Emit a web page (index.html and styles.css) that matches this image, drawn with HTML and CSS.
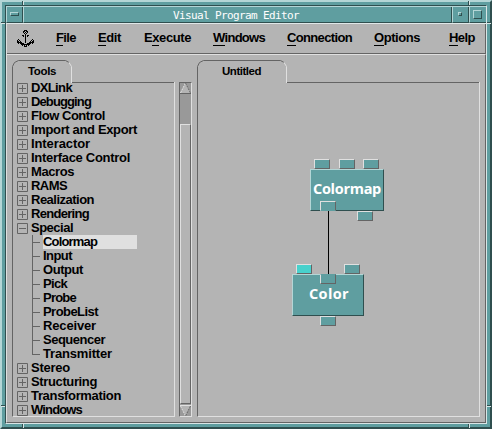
FILE: index.html
```html
<!DOCTYPE html>
<html lang="en">
<head>
<meta charset="utf-8">
<title>Visual Program Editor</title>
<link rel="stylesheet" href="styles.css">
</head>
<body>
<div class="window">
  <div class="frame">
    <header class="titlebar">
      <div class="tb-btn menu-btn"><i></i></div>
      <div class="tb-title"><span data-w="126">Visual Program Editor</span></div>
      <div class="tb-btn min-btn"><i></i></div>
      <div class="tb-btn max-btn"><i></i></div>
    </header>
    <nav class="menubar">
      <svg class="anchor" width="18" height="18" viewBox="0 0 18 18" shape-rendering="crispEdges">
        <defs><pattern id="dither" width="2" height="2" patternUnits="userSpaceOnUse"><path d="M0 0h1v1H0zM1 1h1v1H1z"/></pattern></defs>
        <path fill="url(#dither)" d="M7 0h3v1h1v3h-1v1H7V4H6V1h1zM5 6h7v1H5zM1 9h1v1h1v1h1v2h3v1h3v-1h3v-2h1v-1h1V9h1v1h1v3h-1v1h-2v1h-2v1h-2v1H7v-1H5v-1H3v-1H1v-1H0v-3h1z"/>
        <path d="M7 0h3v1H7zM6 1h1v2H6zM10 1h1v2h-1zM8 4h1v9H8zM5 5h2v1H5zM10 5h2v1h-2zM6 6h1v1H6zM10 6h1v1h-1zM1 9h1v1H1zM15 9h1v1h-1zM0 10h1v2H0zM2 10h1v1H2zM14 10h1v1h-1zM16 10h1v2h-1zM1 12h4v1H1zM12 12h4v1h-4zM3 13h4v1H3zM10 13h4v1h-4zM5 14h2v1H5zM7 14h3v1H7zM10 14h2v1h-2zM7 16h3v1H7z"/>
      </svg>
      <a class="m-file" data-w="20"><u>F</u>ile</a>
      <a class="m-edit" data-w="23"><u>E</u>dit</a>
      <a class="m-exec" data-w="47">E<u>x</u>ecute</a>
      <a class="m-wind" data-w="52"><u>W</u>indows</a>
      <a class="m-conn" data-w="65"><u>C</u>onnection</a>
      <a class="m-opts" data-w="46"><u>O</u>ptions</a>
      <a class="m-help" data-w="26"><u>H</u>elp</a>
    </nav>
    <main class="work">
      <section class="panel tools">
        <svg class="tab" width="163" height="25" viewBox="0 0 163 25" fill="none">
          <path stroke="#646464" d="M.5 25V6.5L2.5 2.5 6.5.5H53.500L57 2.500M60 22.500H162"/>
          <path stroke="#e0e0e0" d="M57 2.500L59.500 6.500V23"/>
        </svg>
        <h2 class="tab-label"><span data-w="28">Tools</span></h2>
        <div class="tree" id="tree"></div>
      </section>
      <div class="scrollbar">
        <svg width="11" height="11" viewBox="0 0 11 11" fill="none"><path fill="#b4b4b4" d="M0 10L5.500 0 11 10z"/><path stroke="#e0e0e0" stroke-dasharray="2 1" d="M.5 10L5.500 0"/><path stroke="#646464" stroke-dasharray="2 1" d="M5.500 0L10.500 10"/><path stroke="#646464" d="M0 10.500H11"/></svg>
        <div class="trough"></div>
        <div class="thumb"></div>
        <svg width="11" height="12" viewBox="0 0 11 12" fill="none"><path fill="#b4b4b4" d="M0 1H11L5.500 12z"/><path stroke="#e0e0e0" d="M0 1.500H11"/><path stroke="#e0e0e0" stroke-dasharray="2 1" d="M.5 2L5.500 12"/><path stroke="#646464" stroke-dasharray="2 1" d="M10.500 2L5.500 12"/></svg>
      </div>
      <section class="panel canvas">
        <svg class="tab" width="283" height="25" viewBox="0 0 283 25" fill="none">
          <path stroke="#646464" d="M.5 25V6.500L2.500 2.500 6.500.5H83.500L87 2.500M90 22.500H282"/>
          <path stroke="#e0e0e0" d="M87 2.500L89.500 6.500V23"/>
        </svg>
        <h2 class="tab-label"><span data-w="39">Untitled</span></h2>
        <div class="wire"></div>
        <div class="node node-map"><span data-w="68">Colormap</span></div>
        <div class="node node-color"><span data-w="40">Color</span></div>
        <i class="port p1"></i><i class="port p2"></i><i class="port p3"></i><i class="port p4 inset"></i><i class="port p5"></i>
        <i class="port p6 set"></i><i class="port p7"></i><i class="port p8 inset"></i><i class="port p9"></i>
      </section>
    </main>
  </div>
  <i class="grip gv gt1"></i><i class="grip gv gt2"></i><i class="grip gv gb1"></i><i class="grip gv gb2"></i>
  <i class="grip gh gl1"></i><i class="grip gh gl2"></i><i class="grip gh gr1"></i><i class="grip gh gr2"></i>
</div>
<script src="script.js"></script>
</body>
</html>
```
FILE: styles.css
```css
* { box-sizing: border-box; }
body { margin: 0; background: #b4b4b4; overflow: hidden; }
.window {
  position: relative; width: 492px; height: 429px; padding: 3px;
  background: #5f9ea0; border: 2px solid; border-color: #b4d6d6 #2f4f4f #2f4f4f #b4d6d6;
  font: bold 13px/14px "Liberation Sans", sans-serif; color: #000;
}
.frame {
  width: 482px; height: 419px; display: flex; flex-direction: column;
  border: 1px solid; border-color: #2f4f4f #d8e6e6 #d8e6e6 #2f4f4f; background: #b4b4b4;
}
.titlebar { display: flex; height: 18px; background: #5f9ea0; border-top: 1px solid #b4d6d6; border-bottom: 1px solid #e0e8e8; }
.tb-btn { height: 16px; border: solid #b4d6d6; border-width: 0; border-left-width: 1px; border-bottom: 1px solid #2f4f4f; display: flex; }
.menu-btn { width: 17px; border-right: 1px solid #2f4f4f; }
.menu-btn i { width: 9px; height: 4px; margin: 5px 0 0 3px; border: 1px solid; border-color: #b4d6d6 #2f4f4f #2f4f4f #b4d6d6; }
.tb-title { width: 429px; border-left: 1px solid #b4d6d6; border-right: 1px solid #2f4f4f; border-bottom: 1px solid #2f4f4f; height: 16px; padding-left: 149px; color: #fff; font: 11px/17px "DejaVu Sans Mono", monospace; white-space: nowrap; }
.min-btn { width: 17px; border-right: 1px solid #2f4f4f; }
.min-btn i { width: 4px; height: 4px; margin: 5px 0 0 5px; border: 1px solid; border-color: #b4d6d6 #2f4f4f #2f4f4f #b4d6d6; }
.max-btn { width: 17px; }
.max-btn i { width: 9px; height: 9px; margin: 3px 0 0 3px; border: 1px solid; border-color: #b4d6d6 #2f4f4f #2f4f4f #b4d6d6; }
.menubar { display: flex; height: 31px; padding-top: 6px; border-left: 1px solid #e0e0e0; border-right: 1px solid #646464; border-bottom: 1px solid #e0e0e0; box-shadow: inset 0 -1px #646464; }
.anchor { flex: none; margin-left: 10px; }
.menubar a { flex: none; height: 17px; margin-top: 1px; white-space: nowrap; }
.menubar u { display: inline-block; height: 15px; text-decoration: none; border-bottom: 1px solid #000; }
.m-file { width: 42px; margin-left: 21px; }
.m-edit { width: 46px; }
.m-exec { width: 69px; }
.m-wind { width: 74px; }
.m-conn { width: 87px; }
.m-opts { width: 75px; }
.work { display: flex; flex: 1; border-left: 1px solid #e0e0e0; border-right: 1px solid #646464; border-bottom: 1px solid #646464; padding: 5px 0 0 5px; }
.panel { position: relative; height: 357px; }
.tools { width: 163px; margin-right: 4px; }
.canvas { width: 283px; margin-left: 5px; }
.panel::before { content: ""; position: absolute; inset: 22px 0 0; border-left: 1px solid #646464; border-right: 1px solid #e0e0e0; border-bottom: 1px solid #e0e0e0; }
.tab { position: absolute; top: 0; left: 0; }
.tab-label { margin: 0; height: 21px; padding: 4px 0 0 16px; font-size: 11.5px; line-height: 14px; }
.canvas .tab-label { padding-left: 25px; }
.tree { position: relative; padding-left: 5px; height: 335px; overflow: hidden; }
.row { display: flex; height: 14px; white-space: nowrap; }
.row svg { flex: none; margin-right: 2px; }
.row span { height: 14px; padding-left: 1px; }
.child span { padding-left: 0; }
.selected span { width: 94px; background: #e0e0e0; }
.scrollbar { width: 13px; height: 335px; margin-top: 22px; display: flex; flex-direction: column; flex: none; background: #999; border: 1px solid; border-color: #646464 #e0e0e0 #e0e0e0 #646464; }
.scrollbar svg { display: block; flex: none; }
.trough { height: 30px; }
.thumb { flex: 1; background: #b4b4b4; border: 1px solid; border-color: #e0e0e0 #646464 #646464 #e0e0e0; }
.node { position: absolute; height: 42px; background: #5f9ea0; border: 1px solid; border-color: #b4d6d6 #2f4f4f #2f4f4f #b4d6d6; color: #fff; font: bold 14.5px/38px "Open Sans", sans-serif; white-space: nowrap; }
.node-map { left: 113px; top: 109px; width: 74px; padding-left: 2px; }
.node-color { left: 95px; top: 214px; width: 72px; padding-left: 16px; }
.wire { position: absolute; left: 131px; top: 151px; width: 1px; height: 63px; background: #000; }
.port { position: absolute; width: 16px; height: 10px; background: #5f9ea0; border: 1px solid; border-color: #e0e0e0 #646464 #646464 #e0e0e0; }
.inset { border-bottom-color: #5f9ea0; }
.p8 { border-top-color: #5f9ea0; border-bottom-color: #646464; }
.set { background: #48d1cc; }
.p1 { left: 117px; top: 99px; } .p2 { left: 142px; top: 99px; } .p3 { left: 166px; top: 99px; }
.p4 { left: 123px; top: 141px; } .p5 { left: 160px; top: 151px; }
.p6 { left: 99px; top: 204px; } .p7 { left: 147px; top: 204px; }
.p8 { left: 123px; top: 214px; } .p9 { left: 123px; top: 256px; }
.grip { position: absolute; }
.gv { width: 2px; height: 4px; border-left: 1px solid #2f4f4f; border-right: 1px solid #d8e6e6; }
.gh { width: 4px; height: 2px; border-top: 1px solid #2f4f4f; border-bottom: 1px solid #d8e6e6; }
.gt1 { left: 20px; top: -1px; } .gt2 { left: 466px; top: -1px; }
.gb1 { left: 20px; top: 422px; } .gb2 { left: 466px; top: 422px; }
.gl1 { left: -1px; top: 20px; } .gl2 { left: -1px; top: 403px; }
.gr1 { left: 485px; top: 20px; } .gr2 { left: 485px; top: 403px; }
```
FILE: script.js
```js
// [label, text width, kind]
const items = [
  ["DXLink", 41], ["Debugging", 60], ["Flow Control", 74], ["Import and Export", 106],
  ["Interactor", 59], ["Interface Control", 99], ["Macros", 43], ["RAMS", 36],
  ["Realization", 63], ["Rendering", 58], ["Special", 42, "open"],
  ["Colormap", 54, "child selected"], ["Input", 29, "child"], ["Output", 40, "child"],
  ["Pick", 24, "child"], ["Probe", 33, "child"], ["ProbeList", 55, "child"],
  ["Receiver", 53, "child"], ["Sequencer", 62, "child"], ["Transmitter", 69, "child last"],
  ["Stereo", 39], ["Structuring", 66], ["Transformation", 90], ["Windows", 51]
];
const icon = kind => {
  if (kind.includes("child")) {
    return `<svg width="24" height="14" fill="none" stroke="#646464"><path d="M15.500 0V${kind.includes("last") ? 8 : 14}M15 7.500H23"/></svg>`;
  }
  return `<svg width="11" height="14" fill="none" stroke="#646464"><path d="M.5 2.500H10.500V12.500H.5zM2 7.500H9${kind ? "" : "M5.500 4V11"}"/></svg>`;
};
document.getElementById("tree").innerHTML = items.map(([name, w, kind = ""]) =>
  `<div class="row ${kind}">${icon(kind)}<span><b data-w="${w}">${name}</b></span></div>`).join("");

// Fit each label to its set width by tracking.
document.querySelectorAll("[data-w]").forEach(el => {
  const range = document.createRange();
  range.selectNodeContents(el);
  const natural = range.getBoundingClientRect().width;
  el.style.letterSpacing = (el.dataset.w - natural) / el.textContent.length + "px";
});
```
